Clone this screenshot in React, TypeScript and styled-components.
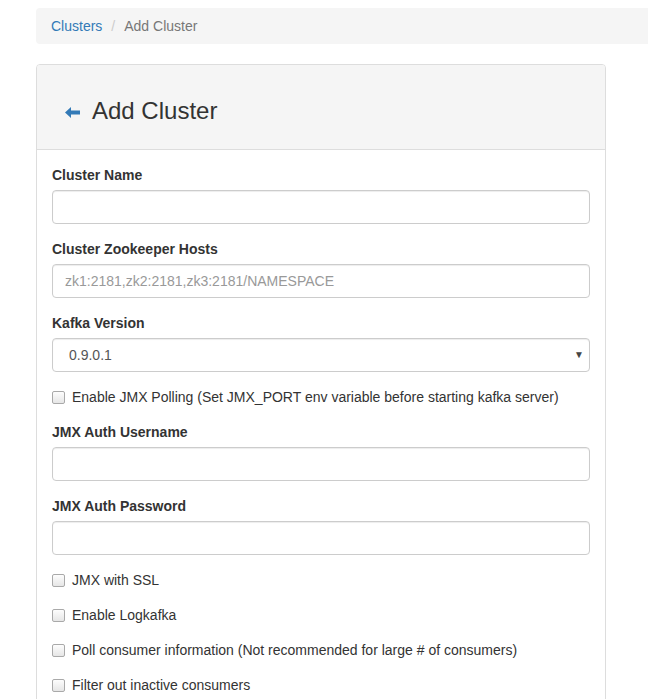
import React from "react";
import styled, { createGlobalStyle } from "styled-components";

const Global = createGlobalStyle`
  html, body { margin: 0; padding: 0; background: #fff; overflow: hidden; }
  body {
    font-family: "Liberation Sans", Arial, Helvetica, sans-serif;
    font-size: 14px;
    line-height: 20px;
    color: #333;
  }
  * { box-sizing: border-box; }
`;

const Page = styled.div`
  padding: 8px 0 0 36px;
`;

const Breadcrumb = styled.ol`
  display: flex;
  align-items: center;
  list-style: none;
  margin: 0 0 20px 0;
  padding: 8px 15px;
  width: calc(100% + 20px);
  height: 36px;
  background: #f5f5f5;
  border-radius: 4px;
`;

const Crumb = styled.li<{ $active?: boolean }>`
  color: ${(p) => (p.$active ? "#777" : "#337ab7")};
`;

const Sep = styled.span`
  color: #ccc;
  padding: 0 9px 0 9px;
`;

const Panel = styled.div`
  width: 570px;
  border: 1px solid #ddd;
  border-radius: 4px;
  background: #fff;
`;

const PanelHeading = styled.div`
  background: #f5f5f5;
  border-bottom: 1px solid #ddd;
  border-radius: 3px 3px 0 0;
  padding: 33px 15px 25px 28px;
`;

const Title = styled.h3`
  display: flex;
  align-items: center;
  margin: 0;
  font-size: 24px;
  font-weight: 500;
  line-height: 26px;
  color: #333;
`;

const BackIcon = styled.svg`
  width: 15px;
  height: 11px;
  margin-right: 12px;
  margin-top: 2px;
`;

const PanelBody = styled.div`
  padding: 15px;
`;

const FormGroup = styled.div`
  margin-bottom: 15px;
`;

const Label = styled.label`
  display: block;
  font-weight: 700;
  margin-bottom: 5px;
`;

const Input = styled.input`
  display: block;
  width: 100%;
  height: 34px;
  padding: 6px 12px;
  font: inherit;
  color: #555;
  border: 1px solid #ccc;
  border-radius: 4px;
  box-shadow: inset 0 1px 1px rgba(0, 0, 0, 0.075);
  background: #fff;
  &::placeholder { color: #999; }
`;

const SelectWrap = styled.div`
  position: relative;
`;

const Select = styled.select`
  display: block;
  width: 100%;
  height: 34px;
  padding: 6px 12px 6px 16px;
  font: inherit;
  color: #555;
  border: 1px solid #ccc;
  border-radius: 4px;
  background: #fff;
  appearance: none;
  -webkit-appearance: none;
  box-shadow: inset 0 1px 1px rgba(0, 0, 0, 0.075);
`;

const Caret = styled.span`
  position: absolute;
  right: 6px;
  top: 7px;
  font-size: 10px;
  color: #444;
  pointer-events: none;
`;

const CheckRow = styled.label`
  display: flex;
  align-items: center;
  height: 20px;
  margin-bottom: 15px;
  color: #333;
`;

const Box = styled.span`
  width: 13px;
  height: 13px;
  border: 1px solid #a9a9a9;
  border-radius: 2px;
  background: linear-gradient(#fdfdfd, #e6e6e6);
  margin-right: 7px;
  flex: none;
`;

const checks = [
  "JMX with SSL",
  "Enable Logkafka",
  "Poll consumer information (Not recommended for large # of consumers)",
  "Filter out inactive consumers",
];

export default function App() {
  return (
    <>
      <Global />
      <Page>
        <Breadcrumb>
          <Crumb>Clusters</Crumb>
          <Sep>/</Sep>
          <Crumb $active>Add Cluster</Crumb>
        </Breadcrumb>
        <Panel>
          <PanelHeading>
            <Title>
              <BackIcon viewBox="0 0 15 11">
                <path d="M0 5.5 L6 0 L6 3.5 L15 3.5 L15 7.5 L6 7.5 L6 11 Z" fill="#337ab7" />
              </BackIcon>
              Add Cluster
            </Title>
          </PanelHeading>
          <PanelBody>
            <FormGroup>
              <Label>Cluster Name</Label>
              <Input type="text" />
            </FormGroup>
            <FormGroup>
              <Label>Cluster Zookeeper Hosts</Label>
              <Input type="text" placeholder="zk1:2181,zk2:2181,zk3:2181/NAMESPACE" />
            </FormGroup>
            <FormGroup>
              <Label>Kafka Version</Label>
              <SelectWrap>
                <Select defaultValue="0.9.0.1">
                  <option value="0.9.0.1">0.9.0.1</option>
                </Select>
                <Caret>▼</Caret>
              </SelectWrap>
            </FormGroup>
            <CheckRow>
              <Box />
              Enable JMX Polling (Set JMX_PORT env variable before starting kafka server)
            </CheckRow>
            <FormGroup>
              <Label>JMX Auth Username</Label>
              <Input type="text" />
            </FormGroup>
            <FormGroup>
              <Label>JMX Auth Password</Label>
              <Input type="password" />
            </FormGroup>
            {checks.map((c) => (
              <CheckRow key={c}>
                <Box />
                {c}
              </CheckRow>
            ))}
          </PanelBody>
        </Panel>
      </Page>
    </>
  );
}
